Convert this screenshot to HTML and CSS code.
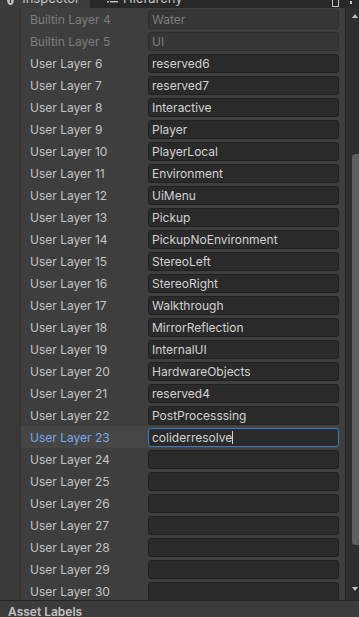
FILE: index.html
```html
<!DOCTYPE html>
<html lang="en">
<head>
    <meta charset="UTF-8">
    <meta name="viewport" content="width=device-width, initial-scale=1.0">
    <title>Tags and Layers</title>
    <link rel="stylesheet" href="styles.css">
</head>
<body>
    <header class="tabs">
        <div class="tab active">
            <span class="tab-icon info">i</span>
            <span class="tab-label">Inspector</span>
        </div>
        <div class="tab">
            <svg class="tab-icon list" width="11" height="10" viewBox="0 0 11 10">
                <rect x="0" y="1" width="2" height="1.4" fill="#c4c4c4"/>
                <rect x="3" y="1" width="8" height="1.4" fill="#c4c4c4"/>
                <rect x="0" y="5" width="2" height="1.4" fill="#c4c4c4"/>
                <rect x="3" y="5" width="8" height="1.4" fill="#c4c4c4"/>
            </svg>
            <span class="tab-label">Hierarchy</span>
        </div>
        <div class="tab-tools">
            <span class="lock-box"></span>
            <span class="dots"></span>
        </div>
    </header>

    <main class="panel">
        <div class="gutter"></div>
        <section class="layers" id="layers"></section>
        <aside class="scrollbar">
            <span class="arrow up"></span>
            <div class="track">
                <div class="thumb"></div>
            </div>
            <span class="arrow down"></span>
        </aside>
    </main>

    <footer class="footer">
        <span>Asset Labels</span>
    </footer>

    <script>
        // Lista de camadas: [rótulo, valor, builtin?]
        const camadas = [
            ['Builtin Layer 4', 'Water', true],
            ['Builtin Layer 5', 'UI', true],
            ['User Layer 6', 'reserved6'],
            ['User Layer 7', 'reserved7'],
            ['User Layer 8', 'Interactive'],
            ['User Layer 9', 'Player'],
            ['User Layer 10', 'PlayerLocal'],
            ['User Layer 11', 'Environment'],
            ['User Layer 12', 'UiMenu'],
            ['User Layer 13', 'Pickup'],
            ['User Layer 14', 'PickupNoEnvironment'],
            ['User Layer 15', 'StereoLeft'],
            ['User Layer 16', 'StereoRight'],
            ['User Layer 17', 'Walkthrough'],
            ['User Layer 18', 'MirrorReflection'],
            ['User Layer 19', 'InternalUI'],
            ['User Layer 20', 'HardwareObjects'],
            ['User Layer 21', 'reserved4'],
            ['User Layer 22', 'PostProcesssing'],
            ['User Layer 23', 'coliderresolve'],
            ['User Layer 24', ''],
            ['User Layer 25', ''],
            ['User Layer 26', ''],
            ['User Layer 27', ''],
            ['User Layer 28', ''],
            ['User Layer 29', ''],
            ['User Layer 30', '']
        ];

        const lista = document.getElementById('layers');
        camadas.forEach(([nome, valor, builtin]) => {
            const ativo = nome === 'User Layer 23';
            let classes = 'row';
            if (builtin) classes += ' builtin';
            if (ativo) classes += ' selected';
            lista.innerHTML += `
                <div class="${classes}">
                    <span class="label">${nome}</span>
                    <div class="field">${valor}${ativo ? '<span class="caret"></span>' : ''}</div>
                </div>
            `;
        });
    </script>
</body>
</html>
```

FILE: styles.css
```css
/* Estilo geral */
body {
    margin: 0;
    padding: 0;
    background-color: #3e3e3e;
    font-family: Inter, "Noto Sans", sans-serif;
    font-size: 12px;
    color: #c4c4c4;
    overflow: hidden;
    height: 617px;
    display: flex;
    flex-direction: column;
}

/* Barra de abas (cortada no topo) */
.tabs {
    height: 8px;
    flex: none;
    display: flex;
    background-color: #282828;
    overflow: hidden;
}

.tab {
    display: flex;
    align-items: flex-end;
    gap: 5px;
    height: 8px;
    padding: 0 10px;
}

.tab.active {
    background-color: #3c3c3c;
    width: 73px;
    padding-left: 7px;
}

.tab-label {
    font-size: 13px;
    margin-bottom: 3px;
    line-height: 13px;
    height: 13px;
}

.tab-icon.info {
    width: 11px;
    height: 11px;
    border-radius: 50%;
    background-color: #c4c4c4;
    color: #3c3c3c;
    font-size: 9px;
    font-weight: 700;
    line-height: 11px;
    text-align: center;
    margin-bottom: 3px;
    margin-right: 3px;
}

.tab-icon.list {
    margin-bottom: 2px;
    margin-left: 7px;
}

.tab-tools {
    margin-left: auto;
    display: flex;
    align-items: flex-end;
    gap: 11px;
    padding-right: 7px;
    height: 8px;
}

.lock-box {
    width: 7px;
    height: 9px;
    border: 1px solid #c4c4c4;
    box-sizing: border-box;
    margin-bottom: 1px;
}

.dots {
    width: 2px;
    height: 3px;
    background-color: #c4c4c4;
    margin-bottom: 4px;
}

/* Painel principal */
.panel {
    flex: 1;
    display: flex;
    min-height: 0;
    overflow: hidden;
}

.gutter {
    width: 20px;
    flex: none;
    background-color: #383838;
    border-right: 1px solid #343434;
}

.layers {
    flex: 1;
    padding-right: 6px;
}

.row {
    height: 22px;
    display: flex;
    align-items: center;
}

.row .label {
    width: 118px;
    padding-left: 9px;
    flex: none;
    white-space: nowrap;
    color: #c4c4c4;
}

.row.builtin .label {
    color: #7d7d7d;
}

.row.selected {
    background-color: #464646;
}

.row.selected .label {
    color: #79a6e6;
}

.field {
    flex: 1;
    height: 17px;
    line-height: 17px;
    border: 1px solid #212121;
    border-radius: 3px;
    background-color: #2a2a2a;
    padding-left: 3px;
    color: #d2d2d2;
    white-space: nowrap;
    overflow: hidden;
}

.row.builtin .field {
    background-color: #363636;
    border-color: #2e2e2e;
    color: #7d7d7d;
}

.row.selected .field {
    border-color: #3a79bb;
}

.caret {
    display: inline-block;
    width: 1px;
    height: 13px;
    background-color: #d2d2d2;
    vertical-align: -2px;
}

/* Barra de rolagem */
.scrollbar {
    width: 13px;
    flex: none;
    background-color: #2e2e2e;
    border-left: 1px solid #262626;
    display: flex;
    flex-direction: column;
    align-items: flex-end;
}

.arrow {
    width: 0;
    height: 0;
    border-left: 3px solid transparent;
    border-right: 3px solid transparent;
    margin-right: 1px;
}

.arrow.up {
    border-bottom: 4px solid #c4c4c4;
    margin-top: 6px;
}

.arrow.down {
    border-top: 4px solid #c4c4c4;
    margin-bottom: 9px;
}

.track {
    flex: 1;
    width: 7px;
    padding-top: 136px;
    padding-bottom: 42px;
    display: flex;
}

.thumb {
    flex: 1;
    background-color: #5f5f5f;
    border-radius: 4px 0 0 4px;
}

/* Rodapé */
.footer {
    height: 16px;
    flex: none;
    background-color: #3c3c3c;
    border-top: 1px solid #232323;
    padding-left: 8px;
    font-weight: 600;
    font-size: 12px;
    line-height: 22px;
    overflow: hidden;
}
```
